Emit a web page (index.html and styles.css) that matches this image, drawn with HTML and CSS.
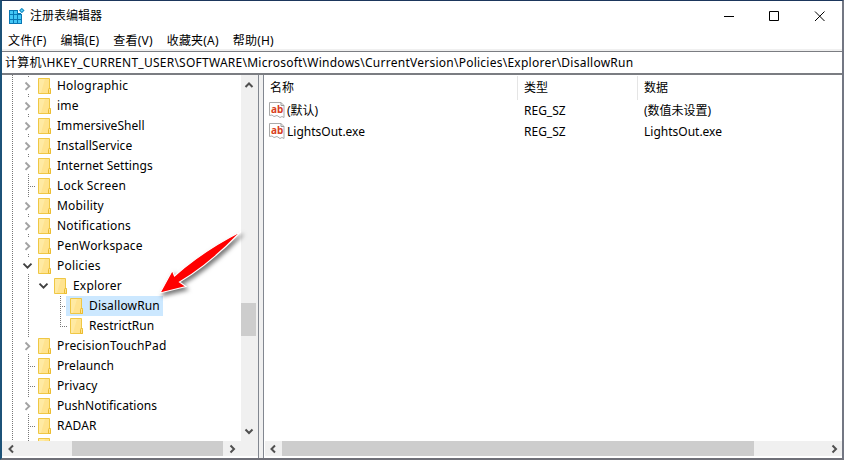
FILE: index.html
```
<!DOCTYPE html>
<html lang="zh-CN">
<head>
<meta charset="utf-8">
<title>注册表编辑器</title>
<link rel="stylesheet" href="styles.css">
</head>
<body>
<svg class="defs" width="0" height="0">
  <symbol id="folder" viewBox="0 0 14 16"><path d="M.5.5h11v10h1v5H.5z" fill="#ffe38f" stroke="#efc744"/><path d="M1 1h6L3 15H1z" fill="#ffeeb0" opacity=".6"/><path d="M10.500 15.500v-4l1-1.500 1 1.500v4z" fill="#ffe38f" stroke="#ebbc30"/></symbol>
  <symbol id="closed" viewBox="0 0 16 20"><path d="M5.500 6.500l3.800 3.700-3.800 3.700" fill="none" stroke="#a3a3a3" stroke-width="1.900"/></symbol>
  <symbol id="open" viewBox="0 0 16 20"><path d="M3.500 7.700l4 4 4-4" fill="none" stroke="#404040" stroke-width="1.900"/></symbol>
  <symbol id="value" viewBox="0 0 16 16"><path d="M.5.5h11.500l3 3v12l-2-1-2 1-3-2-3 1-2-1.500-2.500.5z" fill="#fff" stroke="#aaa"/><path d="M12 .5v3h3" fill="none" stroke="#999"/></symbol>
  <symbol id="left" viewBox="0 0 16 16"><path d="M10 4.500L6.500 8l3.500 3.500" fill="none" stroke="#505050" stroke-width="2"/></symbol>
  <symbol id="right" viewBox="0 0 16 16"><path d="M6.500 4.500L10 8l-3.500 3.500" fill="none" stroke="#505050" stroke-width="2"/></symbol>
  <symbol id="up" viewBox="0 0 16 16"><path d="M4.500 12L8 8.500l3.500 3.500" fill="none" stroke="#505050" stroke-width="2"/></symbol>
  <symbol id="down" viewBox="0 0 16 16"><path d="M4.500 6.500L8 10l3.500-3.500" fill="none" stroke="#505050" stroke-width="2"/></symbol>
</svg>
<div class="window">
  <header class="titlebar">
    <svg class="app" width="16" height="17" viewBox="0 0 16 17"><path d="M0 2h12v4h1v10H0z" fill="#0877b4"/><path d="M1 3h3v3H1zM5 3h3v3H5zM1 7h3v4H1zM5 7h3v4H5zM9 7h3v4H9zM1 12h3v3H1zM5 12h3v3H5zM9 12h3v3H9z" fill="#43c6f5"/><path d="M9 0h5v5H9z" fill="#fff"/><path d="M12.800-.2l2.800 2.700-2.800 2.700L10 2.500z" fill="#168fc6"/><path d="M12.800 1.300L14 2.500l-1.200 1.200-1.200-1.200z" fill="#67d5fa"/></svg>
    <h1>注册表编辑器</h1>
    <svg class="controls" width="138" height="28" viewBox="0 0 138 28"><path d="M20 14.500h10M65.500 9.500h9v9h-9zM111 9.500l9.500 9.500M120.500 9.500L111 19" fill="none" stroke="#000"/></svg>
  </header>
  <nav class="menu"><span>文件(F)</span><span>编辑(E)</span><span>查看(V)</span><span>收藏夹(A)</span><span>帮助(H)</span></nav>
  <div class="address"><span>计算机\HKEY_CURRENT_USER\SOFTWARE\Microsoft\Windows\CurrentVersion\Policies\Explorer\DisallowRun</span></div>
  <main class="panes">
    <section class="left-pane">
      <div class="tree-area">
        <div class="tree">
          <div class="row"><svg class="tw"><use href="#closed"/></svg><svg class="fo"><use href="#folder"/></svg><span>Holographic</span></div>
          <div class="row"><svg class="tw"><use href="#closed"/></svg><svg class="fo"><use href="#folder"/></svg><span>ime</span></div>
          <div class="row"><svg class="tw"><use href="#closed"/></svg><svg class="fo"><use href="#folder"/></svg><span class="snug">ImmersiveShell</span></div>
          <div class="row"><svg class="tw"><use href="#closed"/></svg><svg class="fo"><use href="#folder"/></svg><span class="snug">InstallService</span></div>
          <div class="row"><svg class="tw"><use href="#closed"/></svg><svg class="fo"><use href="#folder"/></svg><span class="snug">Internet Settings</span></div>
          <div class="row"><i class="leaf"></i><svg class="fo"><use href="#folder"/></svg><span>Lock Screen</span></div>
          <div class="row"><svg class="tw"><use href="#closed"/></svg><svg class="fo"><use href="#folder"/></svg><span>Mobility</span></div>
          <div class="row"><svg class="tw"><use href="#closed"/></svg><svg class="fo"><use href="#folder"/></svg><span>Notifications</span></div>
          <div class="row"><svg class="tw"><use href="#closed"/></svg><svg class="fo"><use href="#folder"/></svg><span>PenWorkspace</span></div>
          <div class="row"><svg class="tw"><use href="#open"/></svg><svg class="fo"><use href="#folder"/></svg><span>Policies</span></div>
          <div class="row"><i class="line"></i><svg class="tw child"><use href="#open"/></svg><svg class="fo"><use href="#folder"/></svg><span>Explorer</span></div>
          <div class="row selected"><i class="line"></i><i class="blank"></i><i class="leaf"></i><svg class="fo"><use href="#folder"/></svg><span>DisallowRun</span></div>
          <div class="row"><i class="line"></i><i class="blank"></i><i class="leaf last"></i><svg class="fo"><use href="#folder"/></svg><span class="snug">RestrictRun</span></div>
          <div class="row"><svg class="tw"><use href="#closed"/></svg><svg class="fo"><use href="#folder"/></svg><span>PrecisionTouchPad</span></div>
          <div class="row"><i class="leaf"></i><svg class="fo"><use href="#folder"/></svg><span class="snug">Prelaunch</span></div>
          <div class="row"><i class="leaf"></i><svg class="fo"><use href="#folder"/></svg><span class="snug">Privacy</span></div>
          <div class="row"><svg class="tw"><use href="#closed"/></svg><svg class="fo"><use href="#folder"/></svg><span class="snug">PushNotifications</span></div>
          <div class="row"><i class="leaf"></i><svg class="fo"><use href="#folder"/></svg><span>RADAR</span></div>
          <div class="row"><i class="line"></i><svg class="fo"><use href="#folder"/></svg></div>
        </div>
        <div class="vscroll"><svg><use href="#up"/></svg><div class="track"><div class="thumb"></div></div><svg><use href="#down"/></svg></div>
      </div>
      <div class="hscroll tree-scroll"><svg><use href="#left"/></svg><div class="track"><div class="thumb tree-thumb"></div></div><svg><use href="#right"/></svg><i class="corner"></i></div>
    </section>
    <div class="splitter"></div>
    <section class="right-pane">
      <div class="values">
        <div class="cols head"><span>名称</span><span>类型</span><span>数据</span></div>
        <div class="cols item"><span><b class="icon"><svg><use href="#value"/></svg><em>ab</em></b><span>(默认)</span></span><span>REG_SZ</span><span>(数值未设置)</span></div>
        <div class="cols item"><span><b class="icon"><svg><use href="#value"/></svg><em>ab</em></b><span>LightsOut.exe</span></span><span>REG_SZ</span><span>LightsOut.exe</span></div>
      </div>
      <div class="hscroll"><svg><use href="#left"/></svg><div class="track"><div class="thumb list-thumb"></div></div><svg><use href="#right"/></svg></div>
    </section>
  </main>
</div>
<svg class="arrow" width="104" height="82" viewBox="150 224 104 82"><path d="M160 293L172.300 270.500 174.500 276Q204 250 241 231.500Q210 264 179.500 282L186 286.500Z" fill="#f00" stroke="#fff" stroke-width="1.100"/></svg>
</body>
</html>
```
FILE: styles.css
```
* { box-sizing: border-box; }
body { margin: 0; width: 844px; height: 460px; overflow: hidden; background: #1c5278; color: #000; font: 12px/20px "Noto Sans", "Noto Sans CJK SC", sans-serif; }
.defs { position: absolute; }
svg { display: block; flex: none; }
i { display: block; flex: none; }
.window { height: 460px; display: flex; flex-direction: column; background: #fff; border: solid #1c5278; border-width: 1px 0 2px 2px; border-top-color: #1b365c; border-bottom-color: #6f7078; border-right: 2px solid #737783; }
.titlebar { height: 29px; display: flex; align-items: center; padding-left: 7px; }
.app { margin-top: 1px; }
h1 { margin: 0 0 0 5px; font-size: 12px; font-weight: 400; line-height: 28px; }
.controls { margin-left: auto; }
.menu { height: 19px; display: flex; padding-left: 6px; gap: 14px; letter-spacing: .2px; line-height: 22px; }
.menu span { white-space: nowrap; }
.address { height: 24px; margin-top: 2px; border: solid #7b7d82; border-width: 1px 0 2px; box-shadow: 0 -2px #f0f0f0; padding-left: 3px; line-height: 21px; white-space: nowrap; letter-spacing: .25px; }
.panes { flex: 1; min-height: 0; display: flex; }
.left-pane { width: 256px; display: flex; flex-direction: column; }
.tree-area { flex: 1; min-height: 0; display: flex; }
.tree { flex: 1; overflow: hidden; padding: 1px 0 0 18px; background: repeating-linear-gradient(#777 0 1px, transparent 1px 2px) 10px 0 / 1px 100% no-repeat; }
.row { height: 20px; display: flex; align-items: center; white-space: nowrap; }
.tw { width: 16px; height: 20px; background: linear-gradient(#777 1px, transparent 1px) 8px 0 / 1px 2px no-repeat, linear-gradient(#777 1px, transparent 1px) 8px 18px / 1px 2px no-repeat; }
.tw.child { background: none; }
.fo { width: 14px; height: 16px; margin-left: 2px; }
.row > span { height: 20px; padding: 0 3px; margin-left: 2px; line-height: 19px; letter-spacing: .2px; }
.row > .snug { letter-spacing: .05px; }
.row.selected > span { background: #cce8ff; margin-left: 0; padding-left: 5px; letter-spacing: .15px; }
.selected .fo { background: #cce8ff; box-shadow: -4px 0 #cce8ff, 0 -2px #cce8ff, 0 2px #cce8ff, -4px 2px #cce8ff, -4px -2px #cce8ff; }
.line, .leaf { width: 16px; height: 20px; background: repeating-linear-gradient(#777 0 1px, transparent 1px 2px) 8px 0 / 1px 20px no-repeat; }
.leaf { background: repeating-linear-gradient(#777 0 1px, transparent 1px 2px) 8px 0 / 1px 20px no-repeat, repeating-linear-gradient(90deg, #777 0 1px, transparent 1px 2px) 8px 10px / 7px 1px no-repeat; }
.last { background-size: 1px 11px, 7px 1px; }
.blank { width: 16px; }
.vscroll { width: 17px; display: flex; flex-direction: column; background: #f0f0f0; }
.vscroll svg, .hscroll svg { width: 16px; height: 16px; }
.vscroll svg:last-child { margin-bottom: 2px; }
.track { flex: 1; }
.vscroll .thumb { margin-top: 212px; height: 33px; width: 15px; background: #cdcdcd; }
.hscroll { height: 15px; margin-bottom: 2px; display: flex; background: #f0f0f0; }
.tree-scroll { padding-left: 1px; }
.tree-thumb { width: 151px; height: 15px; margin-left: 53px; background: #cdcdcd; }
.corner { width: 18px; }
.splitter { width: 6px; background: #f0f0f0; border: solid #828790; border-width: 0 1px; }
.right-pane { flex: 1; min-width: 0; display: flex; flex-direction: column; }
.values { flex: 1; }
.right-pane .hscroll { margin-left: 1px; }
.list-thumb { width: 472px; height: 15px; margin-left: 1px; background: #cdcdcd; }
.cols { display: grid; grid-template-columns: 254px 120px 1fr; height: 21px; line-height: 20px; }
.cols > span { display: flex; padding-left: 6px; white-space: nowrap; }
.head { height: 25px; padding-top: 1px; margin-bottom: 1px; line-height: 23px; }
.head > span { border-right: 1px solid #e5e5e5; }
.head > span:last-child { border: 0; }
.item > span:first-child { padding-left: 5px; }
.icon { width: 18px; height: 17px; margin-top: 1px; display: grid; }
.icon svg, .icon em { grid-area: 1 / 1; }
.icon svg { width: 16px; height: 16px; }
.icon em { color: #d8401d; font: 700 10px/14px "Noto Sans", sans-serif; padding-left: 2px; }
.arrow { position: absolute; left: 150px; top: 224px; filter: drop-shadow(2px 3px 2px #0008); }
```
